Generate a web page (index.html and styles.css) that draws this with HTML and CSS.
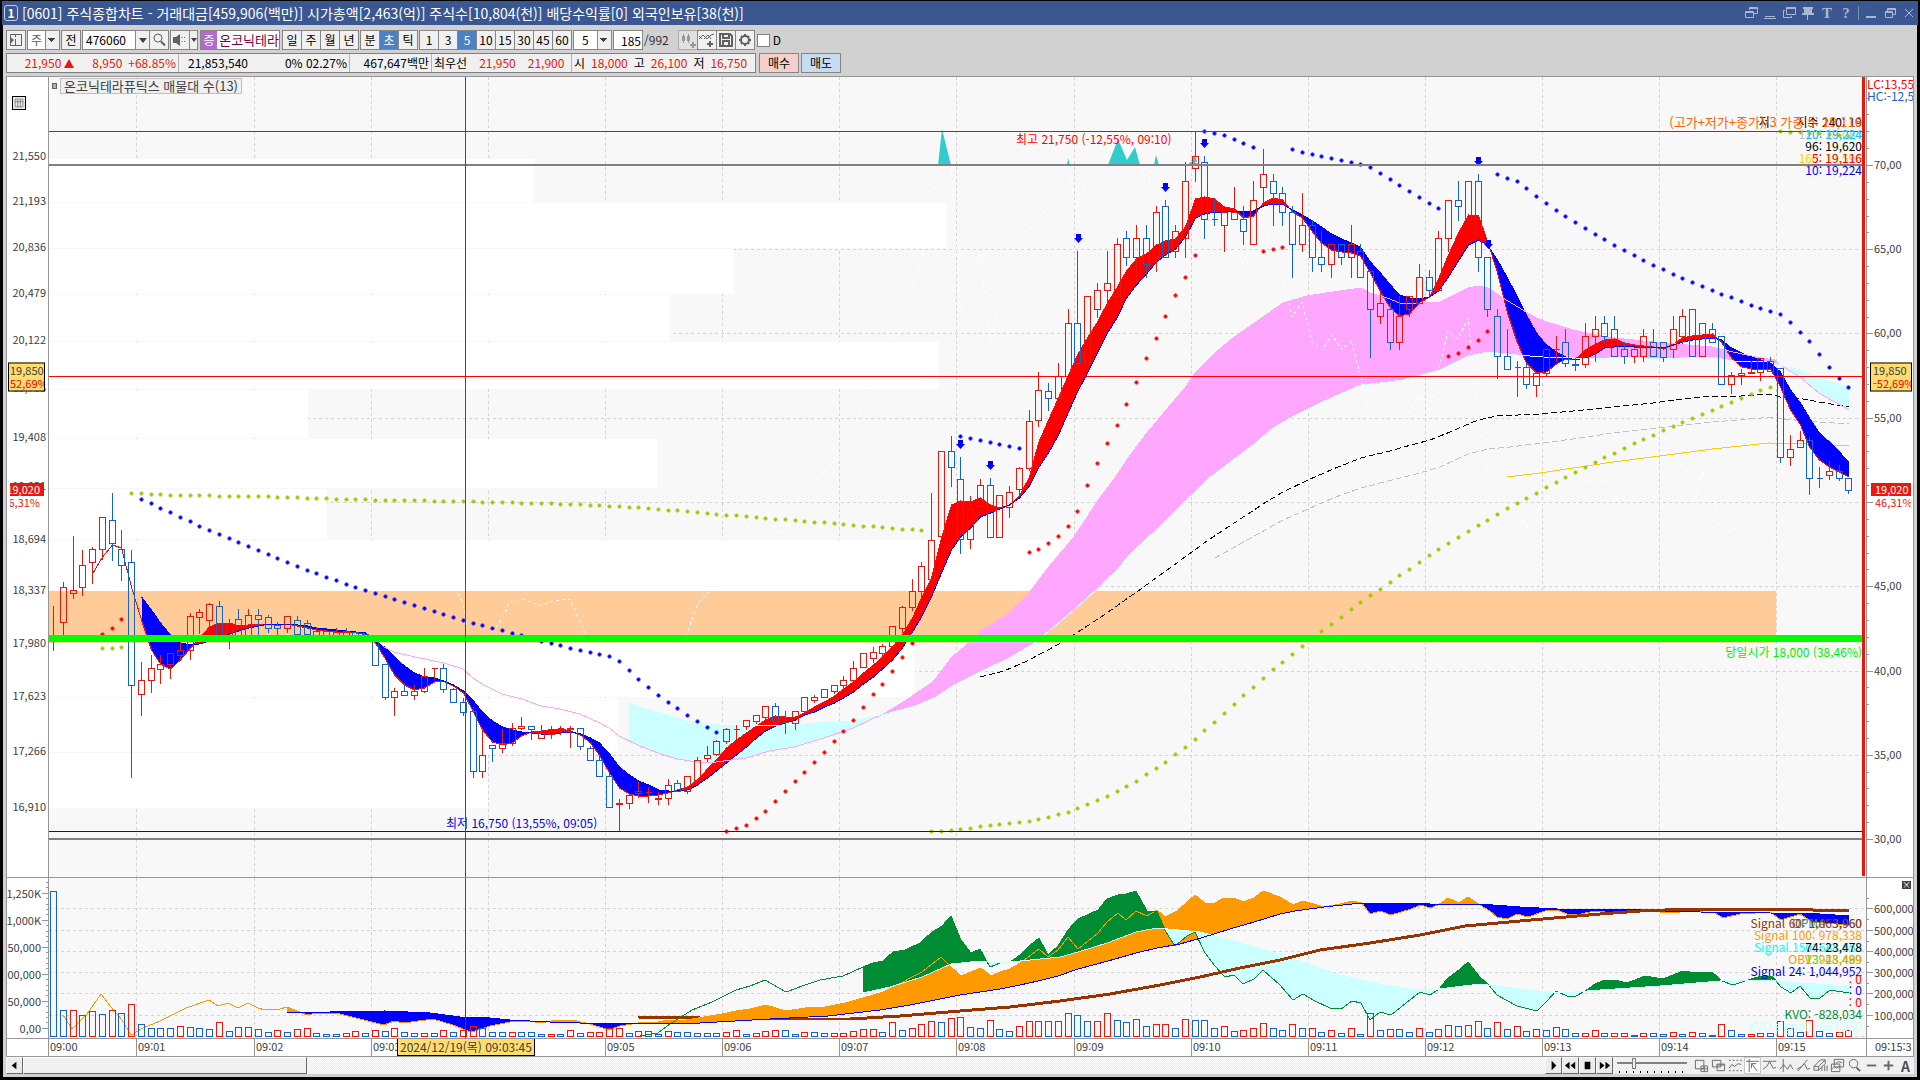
FILE: index.html
```html
<!DOCTYPE html>
<html lang="ko">
<head>
<meta charset="utf-8">
<title>[0601] 주식종합차트</title>
<link rel="stylesheet" href="styles.css">
</head>
<body>
<header class="titlebar">
  <span class="title-no">1</span>
  <h1 class="title-text">[0601] 주식종합차트 - 거래대금[459,906(백만)] 시가총액[2,463(억)] 주식수[10,804(천)] 배당수익률[0] 외국인보유[38(천)]</h1>
  <div class="window-tools">
    <button aria-label="링크"><svg viewBox="0 0 14 14"><path d="M5.500 4V1.500h8v6H10M1.500 5.500h8v6h-8zM1 6.500h8M5 2.500h8"/></svg></button>
    <button aria-label="접기"><svg viewBox="0 0 14 14"><path d="M1 12.500h12M2 10.500h10"/></svg></button>
    <button aria-label="복사"><svg viewBox="0 0 14 14"><path d="M4.500 1.500h9v7h-9zM4 2.500h9M3 4.500H1.500v7h8V10"/></svg></button>
    <button aria-label="고정"><svg viewBox="0 0 14 14"><path class="solid" d="M2 1h10v2h-1v4h2v2H1V7h2V3H2zM6 9h1v5H6z"/></svg></button>
    <button class="glyph">T</button>
    <button class="glyph">?</button>
    <span class="tool-sep"></span>
    <button aria-label="최소화"><svg viewBox="0 0 14 14"><path class="solid" d="M2 10h10v2H2z"/></svg></button>
    <button aria-label="이전 크기"><svg viewBox="0 0 14 14"><path d="M4.500 5V2.500h8v6H10M2.500 5.500h7v6h-7zM2 6.500h8M4.500 3.500h8"/></svg></button>
    <button aria-label="닫기"><svg viewBox="0 0 14 14"><path d="M3 3l8 8M11 3l-8 8"/></svg></button>
  </div>
</header>

<main class="workspace">
  <div class="toolbar">
    <button class="tb" aria-label="종목 목록"><svg viewBox="0 0 18 18"><path d="M3.500 3.500h11v11h-11z"/><path class="fill" d="M3 6l4 3-4 4z"/><path d="M8.500 3v3M8.500 8v6"/></svg></button>
    <select class="sel sel-kind" aria-label="종류"><option>주</option></select>
    <button class="tb">전</button>
    <div class="joined">
      <input class="code" type="text" value="476060" aria-label="종목코드">
      <button class="tb arrow" aria-label="최근 종목"></button>
      <button class="tb" aria-label="검색"><svg viewBox="0 0 18 18"><circle cx="8" cy="7" r="4"/><path class="thick" d="M11 10.500l4 4"/></svg></button>
    </div>
    <div class="joined">
      <button class="tb" aria-label="음성"><svg viewBox="0 0 18 18"><path class="fill" d="M2 6h3l4-3v12l-4-3H2z"/><path d="M11 6v1M11 10v1M13.500 6v1M13.500 10v1"/></svg></button>
      <button class="tb tiny arrow" aria-label="음성 설정"></button>
    </div>
    <div class="stock"><span class="stock-tag">증</span><span class="stock-name">온코닉테라</span></div>
    <div class="joined"><button class="tb">일</button><button class="tb">주</button><button class="tb">월</button><button class="tb">년</button></div>
    <div class="joined"><button class="tb">분</button><button class="tb on">초</button><button class="tb">틱</button></div>
    <div class="joined"><button class="tb">1</button><button class="tb">3</button><button class="tb on">5</button><button class="tb">10</button><button class="tb">15</button><button class="tb">30</button><button class="tb">45</button><button class="tb">60</button></div>
    <select class="sel sel-step" aria-label="주기"><option>5</option></select>
    <label class="count"><input type="text" value="185" aria-label="표시 개수">/992</label>
    <div class="joined tools">
      <button class="tb faint" aria-label="봉 추가"><svg viewBox="0 0 18 18"><path class="fill" d="M3 5h3v5H3zM8 5h3v5H8z"/><path d="M4.500 3v9M9.500 3v9"/><path class="thick" d="M11 14h6M14 11v6"/></svg></button>
      <button class="tb" aria-label="지표 추가"><svg viewBox="0 0 18 18"><path d="M1 8l4-4 4 4 4-4 3-1M1 5l3 3M6 8l4-4 3 4"/><path class="thick" d="M9 13h6M12 10v6"/></svg></button>
      <button class="tb" aria-label="저장"><svg viewBox="0 0 18 18"><path class="thick" d="M3 3h10l2 2v10H3zM6 3v4h6V3M6 15v-5h6v5"/></svg></button>
      <button class="tb" aria-label="설정"><svg viewBox="0 0 18 18"><circle class="thick" cx="9" cy="9" r="4"/><path class="thick" d="M9 3v2M9 13v2M3 9h2M13 9h2M5 5l1 1M12 12l1 1M13 5l-1 1M6 12l-1 1"/></svg></button>
    </div>
    <label class="check"><input type="checkbox">D</label>
  </div>

  <div class="quote">
    <div class="quote-box">
      <span class="cell c1 red"><b>21,950<i class="up"></i></b><b>8,950</b><b>+68.85%</b></span>
      <span class="cell c2"><b>21,853,540</b><b>0% 02.27%</b></span>
      <span class="cell c3">467,647백만</span>
      <span class="cell c4"><b>최우선</b><b class="red">21,950</b><b class="red">21,900</b></span>
      <span class="cell c5"><b>시</b><b class="red">18,000</b><b>고</b><b class="red">26,100</b><b>저</b><b class="red">16,750</b></span>
    </div>
    <button class="deal buy">매수</button>
    <button class="deal sell">매도</button>
  </div>

  <section class="chart" aria-label="온코닉테라퓨틱스 차트">
    <div class="axis axis-left" id="price-axis"><button class="grid-btn" aria-label="표"><svg viewBox="0 0 14 14"><path d="M2.500 2.500h9v9h-9zM2 5.500h10M5.500 3v9M8.500 3v9"/></svg></button></div>
    <div class="plot" id="price-plot">
      <svg id="price-svg" viewBox="49 77 1817 800" preserveAspectRatio="none" role="img" aria-label="가격"></svg>
      <div class="legend"><i></i><span>온코닉테라퓨틱스 매물대 수(13)</span></div>
    </div>
    <div class="axis axis-right" id="percent-axis"></div>

    <div class="axis axis-left lower" id="volume-axis"></div>
    <div class="plot lower" id="volume-plot">
      <svg id="volume-svg" viewBox="49 878 1817 160" preserveAspectRatio="none" role="img" aria-label="거래량"></svg>
    </div>
    <div class="axis axis-right lower" id="osc-axis"><button class="close-pane" aria-label="닫기">×</button></div>

    <div class="axis-left time"></div>
    <div class="plot time" id="time-axis"></div>
    <div class="axis-right time last-time">09:15:3</div>
  </section>

  <footer class="scroller">
    <button class="sb" aria-label="왼쪽"><svg viewBox="0 0 16 16"><path class="black" d="M10 4v8L5 8z"/></svg></button>
    <div class="track"><div class="thumb"></div></div>
    <button class="sb" aria-label="재생"><svg viewBox="0 0 16 16"><path class="black" d="M6 3v10l5-5z"/></svg></button>
    <button class="sb" aria-label="뒤로"><svg viewBox="0 0 16 16"><path class="black" d="M7 4v8L2 8zM13 4v8L8 8z"/></svg></button>
    <button class="sb" aria-label="정지"><svg viewBox="0 0 16 16"><path class="black" d="M5 4h6v8H5z"/></svg></button>
    <button class="sb" aria-label="앞으로"><svg viewBox="0 0 16 16"><path class="black" d="M3 4v8l5-4zM9 4v8l5-4z"/></svg></button>
    <input class="speed" type="range" min="0" max="9" value="2" aria-label="속도">
    <div class="draw-tools">
      <button aria-label="화면 추가"><svg viewBox="0 0 16 16"><path d="M1.500 2.500h9v9h-9zM7.500 8.500h7v6h-7zM11 9v5M8 11.500h6"/></svg></button>
      <button aria-label="화면 겹침"><svg viewBox="0 0 16 16"><path d="M1.500 2.500h9v7h-9zM6.500 6.500h8v7h-8zM6 7.500h8"/></svg></button>
      <button aria-label="구간"><svg viewBox="0 0 16 16"><path d="M1 2.500h2M5 2.500h2M9 2.500h2M13 2.500h2M1 13.500h2M5 13.500h2M9 13.500h2M13 13.500h2M1 11l3-4 3 2 4-3 3 1"/></svg></button>
      <button class="pressed" aria-label="십자선"><svg viewBox="0 0 16 16"><path d="M1 3.500h14M4.500 1v14M7 6l6 8M7 6v5M7 6h5"/></svg></button>
      <button aria-label="수평선"><svg viewBox="0 0 16 16"><path d="M1 3.500h14M1 12l4-3 3-5 4 7 3-1"/></svg></button>
      <button aria-label="수직선"><svg viewBox="0 0 16 16"><path d="M4.500 1v14M1 12l4-5 4 5 3-5 3 5"/></svg></button>
      <button aria-label="추세선"><svg viewBox="0 0 16 16"><path d="M2 14L12 2M1 12l5-3 3-3 3 6 3-1"/></svg></button>
      <button aria-label="전체 지우기"><svg viewBox="0 0 16 16"><path d="M1 9l7-7h5L6 9zM1 9v4h5V9M6 13l7-7V2M9.500 9v5M12.500 8v6M15 8v6"/></svg></button>
      <button aria-label="지표 겹치기"><svg viewBox="0 0 16 16"><path d="M4.500 1.500h10v8h-10zM1.500 6.500h9v8h-9zM2 12l3-3 2 2 3-2M6 6l3-2 4 1"/></svg></button>
      <button aria-label="돋보기"><svg viewBox="0 0 16 16"><circle cx="7" cy="6" r="4.500"/><path class="thick" d="M10 10l4 4"/></svg></button>
      <button aria-label="축소"><svg viewBox="0 0 16 16"><path class="thick" d="M3 8h10"/></svg></button>
      <button aria-label="확대"><svg viewBox="0 0 16 16"><path class="thick" d="M3 8h10M8 3v10"/></svg></button>
      <button class="letter">A</button>
    </div>
  </footer>
</main>
<script src="chart.js"></script>
</body>
</html>
```
FILE: styles.css
```css
* { box-sizing: border-box; }

html, body { height: 100%; }

body {
  margin: 0;
  padding: 1px 2px 3px;
  display: flex;
  flex-direction: column;
  min-height: 720px;
  background: #000;
  color: #000;
  font-family: "Noto Sans CJK KR", sans-serif;
  font-size: 12px;
  line-height: 14px;
}

button, input, select { font: inherit; color: inherit; margin: 0; padding: 0; border-radius: 0; }
button { display: flex; align-items: center; justify-content: center; }
b, i { font-weight: normal; font-style: normal; }
svg { display: block; fill: none; stroke: #808080; }
.red { color: #e8180c; }

/* title bar */
.titlebar {
  flex: none;
  display: flex;
  align-items: center;
  height: 24px;
  padding: 0 2px;
  background: #3a5791;
  color: #fff;
}
.title-no {
  width: 14px;
  height: 16px;
  border: 1px solid #c6d0e6;
  border-radius: 3px;
  text-align: center;
  font-weight: bold;
}
.title-text { flex: 1; margin: 0 0 0 4px; font-size: 14px; font-weight: normal; white-space: nowrap; }
.window-tools { display: flex; align-items: center; gap: 5px; }
.window-tools button { width: 14px; height: 16px; border: 0; background: none; color: #aab8d6; }
.window-tools svg { width: 14px; height: 14px; stroke: #aab8d6; }
.window-tools .solid { fill: #aab8d6; stroke: none; }
.window-tools .glyph { font: bold 15px/16px "Liberation Serif", serif; }
.tool-sep { width: 1px; height: 14px; background: #7e8fb5; }

/* workspace */
.workspace {
  flex: 1;
  min-height: 0;
  display: flex;
  flex-direction: column;
  margin: 0 1px;
  padding: 5px 3px 3px;
  background: #d1d1d1;
}

.toolbar { flex: none; display: flex; align-items: center; height: 20px; gap: 1px; white-space: nowrap; }
.joined { display: flex; height: 20px; }
.joined > * + * { margin-left: -1px; }
.tb { width: 20px; height: 20px; border: 1px solid #868686; background: #f0f0f0; }
.tb.on { background: #4b82c6; color: #fff; }
.tb.faint { opacity: 0.5; }
.tb svg { width: 18px; height: 18px; stroke: #606060; }
.tb .fill { fill: #606060; stroke: none; }
.tb .thick { stroke-width: 2; }
.tb.arrow { width: 15px; }
.tb.tiny.arrow { width: 9px; }
.tb.arrow::before { content: ""; border: 4px solid transparent; border-top: 5px solid #404040; border-bottom: 0; }
.tb.tiny.arrow::before { border-width: 4px 3px 0; }

.sel {
  appearance: none;
  height: 20px;
  border: 1px solid #868686;
  background:
    linear-gradient(to bottom right, #404040 50%, transparent 50%) right 3px center / 4px 4px no-repeat,
    linear-gradient(to bottom left, #404040 50%, transparent 50%) right 7px center / 4px 4px no-repeat,
    linear-gradient(#868686, #868686) right 13px top / 1px 20px no-repeat,
    linear-gradient(#f0f0f0, #f0f0f0) right / 13px 20px no-repeat,
    #fff;
}
.sel-kind { width: 33px; padding-left: 3px; color: #606060; }
.sel-step { width: 39px; padding-left: 8px; }
.code { width: 54px; padding-left: 3px; border: 1px solid #868686; background: #fff; }
.stock { display: flex; width: 80px; height: 20px; margin: 0 1px; border: 1px solid #868686; background: #fff; overflow: hidden; }
.stock-tag { width: 17px; background: #b26ad0; color: #fff; text-align: center; line-height: 18px; }
.stock-name { padding-left: 2px; color: #7a0040; font-size: 13px; line-height: 18px; }
.count { display: flex; align-items: center; gap: 1px; color: #303030; }
.count input { width: 30px; height: 20px; padding-right: 1px; border: 1px solid #868686; background: #fff; color: #000; text-align: right; }
.tools { margin-left: 8px; }
.check { display: flex; align-items: center; gap: 3px; }
.check input { appearance: none; width: 13px; height: 13px; margin-left: 1px; border: 1px solid #808080; background: #fff; }

/* quote row */
.quote { flex: none; display: flex; gap: 2px; height: 20px; margin: 3px 0; white-space: nowrap; }
.quote-box { display: flex; width: 750px; border: 1px solid #808080; background: #f0f0f0; }
.cell { display: flex; align-items: center; padding: 0 2px; border-left: 1px solid #b4b4b4; }
.cell:first-child { border-left: 0; }
.c1 { width: 171px; justify-content: flex-end; gap: 0 6px; }
.c1 b:first-child { display: flex; align-items: center; gap: 3px; margin-right: 12px; }
.c2 { width: 171px; justify-content: space-between; padding-left: 9px; }
.c3 { width: 82px; justify-content: flex-end; }
.c4 { width: 140px; gap: 12px; }
.c5 { flex: 1; gap: 6px; }
.up { border: 5px solid transparent; border-bottom: 9px solid #e8180c; border-top: 0; }
.deal { width: 40px; border: 1px solid #868686; }
.buy { margin-left: 1px; background: #f5d0ca; }
.sell { background: #c5dcf2; }

/* chart frame */
.chart {
  flex: 1;
  min-height: 0;
  display: grid;
  grid-template-columns: 42px minmax(0, 1fr) 47px;
  grid-template-rows: minmax(0, 801fr) minmax(0, 160fr) 18px;
  border: 1px solid #969696;
  background: #fff;
  color: #404040;
}
.plot { position: relative; background: #f8f8f8; border-bottom: 1px solid #969696; overflow: hidden; }
.lower.plot, .lower.axis { border-bottom: 0; }
.plot svg { width: 100%; height: 100%; }
.plot path, .plot line, .plot rect { vector-effect: non-scaling-stroke; }
.axis { position: relative; border-bottom: 1px solid #969696; overflow: hidden; font-size: 11px; }
.axis-left { border-right: 1px solid #969696; }
.axis-right { border-left: 1px solid #969696; }
.time { position: relative; border-top: 1px solid #969696; border-bottom: 0; background: #fff; font-size: 11px; }
.last-time { padding: 0 0 0 8px; overflow: hidden; }

.label { position: absolute; transform: translateY(-50%); white-space: nowrap; }
.axis-left .label { right: 2px; }
.axis-left.lower .label { right: 7px; }
.axis-right .label { left: 7px; }
.axis-right .label.extreme { left: 0; font-size: 12px; }
.plot .label.end { right: 4px; }
.label.large { font-size: 13px; }
.tick { position: absolute; width: 2px; height: 1px; background: #969696; }
.tick.major { width: 6px; }
.axis-left .tick { right: 0; }
.axis-right .tick { left: 0; }

.price-tag {
  position: absolute;
  left: 3px;
  width: 42px;
  height: 29px;
  padding-left: 2px;
  border: 1px solid #000;
  background: #ffdc6e;
  line-height: 13px;
  overflow: hidden;
  white-space: nowrap;
  transform: translateY(-50%);
}
.axis-left .price-tag { left: 1px; width: 37px; padding-left: 1px; }
.price-tag span { display: block; color: #f00000; }
.last-tag { position: absolute; left: 4px; right: 2px; overflow: hidden; line-height: 13px; white-space: nowrap; }
.last-tag b, .last-tag span { display: block; padding-left: 4px; color: #e8180c; }
.last-tag b { background: #e8180c; color: #fff; }
.axis-left .last-tag { left: 3px; right: 4px; direction: rtl; }
.axis-left .last-tag b, .axis-left .last-tag span { padding: 0 4px 0 0; }

.grid-btn { position: absolute; left: 5px; top: 19px; width: 14px; height: 14px; border: 1px solid #000; background: #e8e8e8; }
.grid-btn svg { width: 12px; height: 12px; }
.close-pane { position: absolute; right: 2px; top: 3px; width: 9px; height: 8px; border: 0; background: #404040; color: #fff; font-size: 9px; line-height: 8px; }

.legend { position: absolute; left: 3px; top: 1px; display: flex; align-items: center; gap: 3px; font-size: 13px; }
.legend i { width: 5px; height: 6px; border: 1px solid #606060; background: #b0b0b0; }
.legend span { padding: 0 3px; border: 1px solid #c0c0c0; background: #f0f0f0; line-height: 14px; white-space: nowrap; }

.time-label { position: absolute; top: 0; height: 17px; padding: 0 0 0 1px; border-left: 1px solid #969696; }
.time-label:first-child { border-left: 0; }
.time-now { position: absolute; top: -1px; height: 18px; padding: 0 2px; border: 1px solid #000; background: #ffdc6e; font-size: 12px; line-height: 15px; white-space: nowrap; }

.orange { color: #ff6600; }
.amber { color: #ff9900; }
.cyan { color: #00ccff; }
.aqua { color: #00ffff; }
.ice { color: #ccffff; }
.blue { color: #0000e6; }
.steel { color: #1464c8; }
.scarlet { color: #ff0000; }
.brown { color: #993300; }
.forest { color: #008c32; }
.lime { color: #00f000; }
.black { color: #000; }
.silver { color: #c0c0c0; }
.gold { color: #ffcc00; }
.teal { color: #339999; }

/* bottom strip */
.scroller { flex: none; display: flex; align-items: center; height: 17px; background: #f0f0f0; }
.sb { flex: none; width: 17px; height: 17px; border: 1px solid; border-color: #f8f8f8 #686868 #686868 #f8f8f8; background: #ececec; }
.sb svg { width: 15px; height: 15px; stroke: none; }
.sb .black { fill: #000; }
.track { flex: 1; height: 17px; background: repeating-conic-gradient(#ececec 0 25%, #fdfdfd 0 50%) 0 0 / 2px 2px; }
.thumb { width: 19%; max-width: 284px; height: 17px; border: 1px solid; border-color: #fff #686868 #686868 #fff; background: #f0f0f0; }
.speed {
  appearance: none;
  width: 70px;
  height: 17px;
  margin: 0 6px 0 4px;
  background:
    linear-gradient(#808080, #808080) 0 5px / 100% 2px no-repeat,
    repeating-linear-gradient(to right, #000 0 1px, transparent 1px 7px) 2px 14px / 68px 2px no-repeat;
}
.speed::-webkit-slider-thumb { appearance: none; width: 4px; height: 11px; margin-top: -4px; border: 1px solid #808080; background: #f0f0f0; }
.draw-tools { display: flex; }
.draw-tools button { width: 17px; height: 17px; border: 0; background: none; }
.draw-tools .pressed { border: 1px solid #c8c8c8; background: #fff; }
.draw-tools svg { width: 15px; height: 15px; stroke: #686868; }
.draw-tools .thick { stroke-width: 2; }
.draw-tools .letter { font-weight: bold; font-size: 14px; color: #505050; }
```
FILE: chart.js
```js
const NS = 'http://www.w3.org/2000/svg';
const PLOT = { x: 49, w: 1817 };
const STEP = 9.757;
const cx = i => Math.floor(53.5 + STEP * i) + 0.5;

// direction, high, body top, body bottom, low
const CANDLES = `r606,635,640,650 r582,587,622,635 r536,590,593,598 r550,565,587,595 r547,549,562,583 r517,517,549,559 b493,520,543,560 b530,549,565,580 b550,562,685,777 r662,680,694,715
r655,668,680,692 r655,664,669,683 r653,653,664,678 r642,650,655,660 r613,616,650,659 r609,612,617,633 r603,604,620,635 b601,606,635,635 r619,625,640,648 b609,619,635,635
r609,615,635,635 b609,615,619,635 b615,617,628,632 b622,625,628,635 r616,616,628,632 b616,620,634,634 b620,623,634,634 r627,631,635,635 b631,631,635,635 r628,632,635,635
b628,631,635,635 b632,632,636,636 b634,634,638,638 b636,636,665,665 b664,664,697,699 r688,691,697,715 b683,691,695,695 r685,691,695,699 r668,676,691,692 r668,668,668,678
b664,668,689,692 b688,689,702,702 b698,702,712,715 b707,711,771,777 r728,755,771,777 b745,745,748,761 r729,743,748,752 r723,728,743,745 r717,726,728,729 b726,726,729,739
r725,733,738,738 r726,729,734,738 r726,728,728,734 r726,728,729,747 b728,728,746,749 b746,748,760,760 b755,760,776,776 b773,776,807,807 r799,803,804,831 r795,795,803,808
r782,791,793,797 r787,792,792,802 r792,798,799,804 r779,785,798,804 b780,783,791,791 r776,776,791,793 r757,760,780,780 r746,755,758,761 r740,741,754,755 r728,729,741,743
r725,729,729,738 r720,720,726,729 r715,715,721,723 r706,706,717,719 b703,706,721,721 b711,722,722,733 r711,711,723,729 r697,697,711,711 r695,697,700,702 r689,689,697,697
r685,685,691,693 r676,680,685,687 r661,668,680,682 r653,653,667,667 r647,652,658,662 r644,646,653,656 r626,626,646,646 r606,607,628,632 r579,591,607,610 r562,566,591,597
r493,540,579,581 r451,451,536,536 b436,451,467,486 b457,479,539,553 r496,509,539,548 r479,485,506,506 b478,485,537,537 r495,495,537,537 r486,492,507,517 r467,468,489,494
r410,421,468,470 r372,390,420,426 b383,391,398,410 r363,376,398,398 r309,323,376,376 b251,323,363,369 r296,296,363,363 r283,290,309,317 r251,283,290,309 r238,244,296,303
b231,238,257,265 r225,238,257,283 b225,238,264,277 r206,212,257,271 b200,206,257,257 r225,231,251,257 r162,181,238,257 r132,156,168,181 b156,162,219,238 b200,219,219,225
r212,212,225,251 r187,212,219,219 b206,219,231,244 r181,200,244,244 r149,174,187,203 b174,181,193,225 b187,193,212,225 b206,212,244,277 r193,225,244,251 b220,225,257,271
b231,257,264,271 r244,244,264,277 b244,244,257,264 r225,244,257,277 b244,251,277,277 b271,271,309,357 r290,303,316,323 b303,309,342,349 r296,316,342,349 r296,296,309,316
r264,277,303,303 b270,277,290,297 r231,238,290,290 r200,200,238,251 b181,200,206,220 r181,181,219,226 b174,181,257,271 b257,257,309,316 b309,316,356,378 b329,356,369,369
r361,367,367,396 b364,367,384,388 r372,373,385,396 r349,349,373,375 r336,349,349,361 b329,342,363,366 b358,364,365,370 r323,336,364,367 r316,329,336,361 b316,323,336,343
b316,329,356,356 b342,349,356,363 r349,349,356,362 r329,336,356,361 b329,342,356,356 b342,342,357,361 r316,329,349,357 r309,316,336,343 b309,309,356,356 r323,323,356,356
b323,329,342,342 b336,336,384,384 r372,375,384,393 r369,373,375,384 r361,372,373,373 r358,358,372,380 b357,361,371,371 b368,368,457,462 r435,449,457,465 r431,440,447,447
b437,440,478,494 b467,478,478,487 r461,471,475,479 b465,471,478,480 b478,478,490,493`
  .split(/\s+/).map(s => [s[0], ...s.slice(1).split(',').map(Number)]);

// fast and slow averages, one value per bar
const FAST_START = 4, SLOW_START = 9;
const FAST = [574,557,545,548,587,620,650,664,669,660,648,638,627,623,623,626,625,624,624,624,624,626,628,630,631,632,632,633,634,643,659,675,685,690,688,682,681,686,693,712,730,742,745,743,736,732,731,730,729,731,735,743,755,773,788,794,796,796,795,793,790,787,780,769,760,748,740,733,726,720,716,717,717,713,707,702,696,689,682,673,665,657,647,635,618,598,578,538,505,501,502,498,505,508,505,496,477,443,420,398,375,355,338,322,303,287,271,259,254,245,241,239,227,199,197,199,207,209,218,216,203,198,200,212,218,232,243,250,252,253,256,273,292,308,316,314,303,297,279,255,233,215,216,241,273,313,343,363,373,372,364,359,359,350,344,340,339,343,345,346,347,349,344,338,336,335,334,342,358,367,369,370,369,387,410,425,447,460,467,472,477];
const SLOW = [597,610,623,635,643,645,644,641,637,634,631,628,626,624,624,624,625,626,628,629,630,631,632,633,639,648,657,666,673,677,678,681,685,691,701,712,721,727,730,732,733,734,734,733,732,734,738,743,754,767,775,781,785,790,791,791,790,785,778,771,763,755,747,738,731,726,723,720,715,712,707,703,698,692,684,677,669,660,648,632,617,597,573,550,537,528,517,513,509,505,498,486,468,453,435,412,392,373,353,333,317,298,285,274,262,255,249,237,218,214,212,212,211,212,211,206,204,204,210,215,221,227,234,239,243,247,262,273,285,295,298,299,297,291,277,261,245,240,245,260,278,297,315,333,345,352,357,360,358,354,348,347,346,347,347,347,348,345,342,340,339,338,340,348,353,357,360,363,372,390,403,418,433,442,452,462];

const pts = s => s.trim().split(/\s+/).map(p => p.split(',').map(Number));
const at = (line, x) => {
  for (let k = 1; k < line.length; k++) {
    const [x0, y0] = line[k - 1], [x1, y1] = line[k];
    if (x <= x1) return y0 + (y1 - y0) * Math.max(0, (x - x0) / (x1 - x0));
  }
  return line[line.length - 1][1];
};

function pen(svg) {
  const add = (name, attrs) => {
    const el = document.createElementNS(NS, name);
    for (const k in attrs) el.setAttribute(k, attrs[k]);
    svg.appendChild(el);
    return el;
  };
  return {
    path: (d, a) => add('path', { d, stroke: 'none', ...a }),
    line: (points, stroke, a) => add('path', { d: 'M' + points.map(p => p.join(' ')).join('L'), stroke, 'shape-rendering': 'crispEdges', ...a }),
    rect: (x, y, w, h, fill, a) => add('rect', { x, y, width: w, height: h, fill, stroke: 'none', 'shape-rendering': 'crispEdges', ...a }),
  };
}

// fill between two lines, one colour where a runs above b, the other where it runs below
function band(p, a, b, x0, x1, above, below) {
  let up = '', down = '';
  for (let x = x0; x < x1; x++) {
    const e = Math.min(x + 1, x1);
    const ya = at(a, x), yb = at(b, x), ya2 = at(a, e), yb2 = at(b, e);
    const d = `M${x} ${ya.toFixed(1)}L${e} ${ya2.toFixed(1)}V${yb2.toFixed(1)}L${x} ${yb.toFixed(1)}Z`;
    if (ya + ya2 <= yb + yb2) up += d; else down += d;
  }
  p.path(up, { fill: above, 'shape-rendering': 'crispEdges' });
  p.path(down, { fill: below, 'shape-rendering': 'crispEdges' });
}

const GRID_X = [136, 254, 371, 488, 605, 722, 839, 956, 1074, 1191, 1308, 1425, 1542, 1659, 1776];
const RED = '#e8180c', BLUE = '#1464c8';

/* price pane */
const P = pen(document.getElementById('price-svg'));
const dash = { 'stroke-dasharray': '3 3' };
GRID_X.forEach(x => P.line([[x + .5, 77], [x + .5, 877]], '#d3d3d3', dash));
[249, 333, 418, 502, 586, 671, 755].forEach(y => P.line([[49, y + .5], [1862, y + .5]], '#d3d3d3', dash));

// volume profile
[[159, 202, 534], [203, 248, 947], [249, 294, 734], [295, 341, 670], [342, 389, 939], [390, 438, 308], [439, 488, 657],
 [489, 539, 327], [540, 591, 1060], [643, 697, 915], [698, 752, 618], [753, 808, 488]]
  .forEach(([t, b, r]) => P.rect(49, t, r - 49, b - t, '#fff'));
P.rect(49, 591, 1727, 52, '#ffcc99');

P.path('M938 165L942 129L944 137L951 165ZM1067 165L1068 158L1070 165ZM1108 165L1118 139L1127 160L1135 147L1140 165ZM1154 165L1156 155L1159 165ZM1188 165L1195 155L1198 165Z', { fill: '#33cccc' });

const OVER = pts(`375,638 384,647 394,652 415,657 444,663 463,669 473,678 482,684 502,694 522,699 541,706 560,709 580,714 600,723 609,728 619,736 640,746 658,753 677,759 697,762 716,762 746,758 769,751 794,747 824,738 853,728 885,713 902,703 921,690 933,682 952,657 970,642 980,632 1009,613 1029,593 1048,568 1074,537 1097,502 1117,475 1129,457 1147,433 1167,409 1185,388 1195,373 1215,353 1233,338 1253,324 1273,310 1283,303 1307,296 1333,292 1361,288 1370,293 1387,298 1400,303 1420,303 1440,302 1448,298 1468,288 1478,286 1488,288 1503,298 1523,310 1536,318 1547,322 1573,330 1605,337 1643,341 1687,345 1712,347 1733,352 1761,358 1775,360 1780,365 1800,377 1819,393 1849,410`);
const UNDER = pts(`629,703 640,707 667,715 686,721 707,724 726,726 794,725 826,722 853,721 885,714 915,706 936,697 954,685 980,672 1009,658 1033,644 1054,627 1074,610 1097,589 1117,570 1131,553 1154,532 1179,507 1195,492 1208,479 1233,460 1253,445 1273,428 1292,417 1312,407 1333,397 1361,385 1380,383 1403,380 1417,376 1440,370 1468,356 1488,352 1517,355 1543,357 1573,358 1607,358 1630,357 1660,359 1700,357 1717,358 1733,361 1770,362 1780,365 1800,370 1819,378 1849,387`);
band(P, OVER, UNDER, 629, 1849, '#ffa6ff', '#ccffff');

P.line(pts(`458,594 463,603 468,633`), '#fff', dash);
P.line(pts(`492,632 502,619 510,602 522,599 531,602 541,606 550,602 560,600 570,599 578,617 585,633`), '#fff', dash);
P.line(pts(`684,642 693,617 698,603 709,592 741,537 765,503 776,531 786,533 804,484 815,484 826,469 844,452 854,428 863,403 900,330 923,252 934,200 938,165 951,165 956,237 960,313 980,253 991,347 999,301 1010,297 1018,280 1038,203 1048,217 1067,160 1078,223 1087,173 1108,165 1140,165 1147,188 1154,165 1165,213 1185,160 1198,163 1204,243 1233,237 1243,263 1263,223 1283,277 1292,317 1302,302 1312,342 1322,350 1332,335 1342,350 1351,340 1361,377 1370,417 1380,413 1391,457 1410,410 1420,395 1429,411 1448,331 1458,339 1468,318 1480,430 1490,485 1509,511 1518,512 1528,528 1547,495 1566,509 1575,509 1585,480 1605,480 1614,501 1644,483 1660,505 1683,460 1693,507 1702,470 1712,492 1722,535 1741,525 1751,525 1761,507 1771,520 1776,548`), '#fff', dash);

P.line(pts(`980,677 1004,671 1027,661 1061,643 1075,634 1104,615 1138,591 1163,573 1207,541 1263,504 1283,492 1308,480 1333,469 1361,458 1390,451 1400,448 1430,440 1450,432 1478,420 1497,416 1540,414 1573,411 1613,407 1653,403 1683,399 1712,396 1741,396 1772,394 1780,397 1803,399 1819,402 1849,407`), '#000', { 'stroke-dasharray': '6 3' });
P.line(pts(`1215,558 1240,544 1260,533 1283,520 1308,509 1333,498 1361,488 1400,478 1420,473 1440,467 1468,454 1488,449 1510,447 1543,443 1573,439 1613,433 1667,427 1712,422 1750,419 1772,417 1783,419 1819,422 1849,424`), '#c0c0c0', { 'stroke-dasharray': '6 3' });
P.line(pts(`1507,477 1540,473 1573,468 1613,462 1660,456 1712,449 1741,446 1768,443 1807,444 1849,446`), '#ffcc00');

const fast = FAST.map((y, k) => [cx(k + FAST_START), y]);
const slow = SLOW.map((y, k) => [cx(k + SLOW_START), y]);
band(P, fast, slow, cx(SLOW_START), cx(184), '#ff0000', '#0000ff');
P.line(fast, '#f01010');
P.line(slow, '#0000ff');
P.line(OVER, '#ffa6ff');
P.line(UNDER, '#ccffff');

// candles
for (const dir of 'rb') {
  let d = '';
  CANDLES.forEach(([c, hi, top, bot, lo], i) => {
    if (c !== dir) return;
    const x = cx(i), t = top + .5, b = bot + .5;
    d += `M${x} ${hi}V${t}M${x} ${b}V${lo + 1}M${x - 3} ${t}H${x + 3}V${b}H${x - 3}Z`;
  });
  P.path(d, { stroke: dir === 'r' ? RED : BLUE, 'shape-rendering': 'crispEdges' });
}

// trailing stops: a dot for every bar on the given line
function dots(i0, i1, line, fill) {
  const l = pts(line);
  let d = '';
  for (let i = i0; i <= i1; i++) {
    const x = cx(i), y = Math.round(at(l, x)) + .5;
    d += `M${x - 1} ${y - 2}h2v1h1v2h-1v1h-2v-1h-1v-2h1z`;
  }
  P.path(d, { fill });
}
const DB = '#0000ff', DG = '#99cc00', DR = '#ff0000';
dots(9, 68, '140,498 170,512 209,530 248,546 287,562 336,580 375,593 414,605 453,617 492,628 522,635 550,643 580,650 609,656 619,661 639,679 648,687 669,702 687,715 707,727 716,732', DB);
dots(93, 99, '960,436 1019,448', DB);
dots(118, 123, '1204,131 1224,135 1253,147', DB);
dots(127, 142, '1292,149 1312,154 1341,160 1361,164 1370,167 1380,173 1400,185 1419,197 1439,208', DB);
dots(148, 184, '1497,174 1517,181 1546,203 1575,222 1614,245 1644,260 1673,274 1712,290 1741,301 1771,311 1780,314 1790,321 1810,341 1829,366 1849,388', DB);
dots(5, 7, '101,648 111,648 121,647', DG);
dots(8, 89, '131,493 180,495 258,496 345,499 463,501 570,504 639,507 707,513 794,520 844,524 921,530', DG);
dots(90, 176, '931,831 941,831 960,829 999,824 1029,821 1048,817 1068,812 1087,804 1107,796 1136,781 1165,762 1185,747 1195,739 1263,678 1302,646 1322,631 1361,602 1400,575 1439,549 1468,531 1497,514 1527,498 1556,482 1595,462 1624,448 1653,435 1683,422 1712,410 1741,398 1761,390 1771,387', DG);
dots(177, 184, '1780,131 1800,132 1819,133 1839,135 1849,136', DG);
dots(5, 7, '101,635 111,629 121,619', DR);
dots(69, 88, '726,831 746,825 765,812 785,791 804,773 833,743 853,721 873,695 892,672 912,643', DR);
dots(100, 117, '1029,552 1038,549 1048,543 1058,536 1068,527 1078,510 1087,486 1097,464 1107,444 1117,426 1126,405 1136,383 1146,359 1156,339 1165,317 1175,296 1185,278 1195,255', DR);
dots(124, 126, '1263,251 1283,247', DR);
dots(143, 147, '1448,356 1458,353 1468,347 1478,340 1488,331', DR);

// sell arrows
P.path([[960, 444], [990, 465], [1078, 238], [1165, 187], [1204, 143], [1478, 161], [1488, 244]]
  .map(([x, y]) => `M${x - 2} ${y - 4}h5v4h2l-4.500 5l-4.500 -5h2z`).join(''), { fill: DB });

// reference levels
P.rect(49, 164, 1814, 2, '#808080');
P.rect(49, 838, 1814, 2, '#808080');
P.rect(49, 831, 1814, 1, '#0000ff');
P.rect(49, 635, 1814, 7, '#00ff00');
P.rect(49, 131, 1814, 1, '#ff0000');
P.rect(49, 376, 1814, 1, '#ff0000');
P.rect(465, 77, 1, 800, '#ff0000');
P.rect(1862, 77, 3, 799, RED);

/* volume pane */
const V = pen(document.getElementById('volume-svg'));
GRID_X.forEach(x => V.line([[x + .5, 878], [x + .5, 1038]], '#d3d3d3', dash));
[908, 930, 951, 972, 993, 1015, 1036].forEach(y => V.line([[49, y + .5], [1866, y + .5]], '#d3d3d3', dash));

const OBV = pts(`63,1015 72,1029 87,1014 101,994 111,1007 122,1020 131,1035 143,1028 160,1021 186,1008 209,1000 218,1006 228,1003 238,1008 248,1003 258,1008 265,1010 280,1009 287,1007 295,1010 307,1015 317,1013 336,1013 360,1019 384,1025 394,1021 404,1023 433,1019 453,1025 468,1031 472,1032 490,1026 510,1022 530,1021 541,1023 556,1020 572,1020 590,1024 609,1030 620,1026 638,1023 658,1022 669,1020 680,1021 698,1018 722,1014 736,1011 750,1009 766,1005 786,1011 805,1008 825,1007 845,1003 863,998 883,992 898,985 910,978 922,972 941,957 951,967 961,976 981,968 991,976 1000,972 1010,969 1020,963 1039,949 1048,957 1058,950 1068,937 1078,949 1098,933 1107,922 1118,913 1126,920 1136,911 1147,916 1157,910 1165,917 1177,911 1195,895 1205,903 1215,903 1224,898 1234,898 1243,902 1254,898 1263,891 1280,897 1293,905 1303,901 1324,907 1340,904 1352,901 1362,903 1370,914 1380,911 1391,915 1411,909 1421,905 1430,908 1438,905 1448,898 1459,903 1468,897 1480,905 1490,911 1497,917 1507,919 1517,914 1528,917 1545,911 1557,910 1567,914 1576,915 1595,911 1615,913 1650,911 1670,913 1690,911 1715,913 1723,918 1740,914 1770,912 1781,920 1800,914 1812,922 1825,923 1838,924 1849,926`);
const SIG24 = pts(`287,1012 330,1012 385,1011 430,1013 460,1017 490,1018 510,1020 550,1022 580,1023 640,1023 700,1023 770,1019 828,1016 880,1010 910,1005 960,995 1000,989 1020,985 1038,981 1058,976 1078,969 1108,961 1136,953 1157,948 1180,944 1201,938 1230,929 1254,922 1280,914 1295,911 1324,907 1362,903 1400,903 1430,904 1480,904 1520,907 1557,909 1640,910 1700,912 1770,913 1820,914 1849,916`);
const SIG60 = pts(`638,1017 700,1018 800,1019 850,1019 900,1016 960,1011 1010,1007 1060,1001 1110,994 1160,985 1200,977 1240,968 1280,960 1320,950 1370,943 1420,935 1465,926 1520,921 1600,914 1640,911 1690,909 1776,909 1849,911`);
const KVO = pts(`640,1036 658,1033 670,1024 692,1010 712,1002 736,990 750,986 765,980 786,992 805,985 820,980 843,976 863,967 873,963 883,961 893,952 905,950 920,943 932,932 942,926 951,916 961,940 971,953 980,949 990,967 1000,963 1010,962 1020,955 1028,947 1039,938 1048,955 1058,946 1068,930 1078,919 1098,910 1107,899 1118,895 1126,894 1136,891 1147,911 1157,911 1166,932 1175,946 1187,936 1195,932 1205,953 1215,966 1225,977 1234,975 1243,984 1254,979 1263,970 1280,985 1293,1000 1303,994 1315,1001 1330,1008 1341,1009 1352,1001 1361,1003 1370,1020 1380,1012 1391,1015 1401,1007 1420,992 1430,995 1439,989 1448,978 1459,970 1468,962 1480,977 1488,984 1497,995 1517,1006 1537,1011 1547,1001 1556,991 1567,996 1576,996 1585,991 1595,984 1605,980 1615,980 1627,983 1645,976 1663,979 1683,971 1697,973 1712,972 1722,981 1733,985 1745,981 1761,976 1772,976 1781,987 1791,993 1800,986 1810,998 1820,998 1830,990 1849,993`);
const KSIG = pts(`863,993 890,987 922,977 951,964 980,961 1000,963 1020,961 1060,957 1078,952 1107,943 1136,932 1157,928 1200,932 1230,940 1254,947 1280,954 1300,961 1340,975 1380,984 1411,989 1439,989 1480,984 1520,989 1560,993 1600,990 1660,986 1720,981 1772,980 1800,983 1849,986`);

V.line(SIG60, '#993300', { 'stroke-width': 3 });
band(V, OBV, SIG24, 287, 1849, '#ff9900', '#0000ff');
band(V, KVO, KSIG, 863, 1849, '#008c32', '#ccffff');
V.line(OBV, '#ff9900');
V.line(KVO, '#008c32');
V.line(KSIG, '#ccffff');
V.line(SIG24, '#0000ff');
V.line(SIG60.filter(p => p[0] >= 850), '#993300', { 'stroke-width': 3 });

// bar tops, one per candle
const VOLUME = `b891 b1010 r1010 b1015 r1011 b1014 r1010 b1013 r1004 b1024 b1028 b1028 b1028 r1026 b1027 b1028 b1029 r1022 b1031 r1027 r1027 b1029 b1032 r1030 b1032 r1029 r1028 b1033 b1034 b1034 r1033 r1031 b1033 r1030 b1031 r1028 b1032 b1033 r1033 b1033 r1030 b1032 r1030 r1026 b1028 b1032 b1032 r1032 b1032 b1032 b1034 r1034 b1034 r1030 b1033 r1032 r1032 r1028 r1028 b1033 r1031
b1031 b1034 r1031 b1032 b1032 b1033 b1033 b1033 r1032 r1030 b1034 r1033 r1031 r1030 b1030 b1034 r1032 b1032 b1033 r1033 r1033 r1031 r1029 r1029 b1032 r1022 b1030 r1028 r1024 r1021 b1022 r1018 r1017 b1027 b1028 r1020 b1029 b1031 r1026 r1021 r1021 b1021 r1021 r1013 b1015 b1021 r1021 r1013 b1020 b1022 r1019 b1026 r1024 r1024 b1028 r1019 b1020 b1020 b1028 r1026 b1031 r1030 r1028 r1023 b1028
b1030 r1024 b1028 r1028 b1032 r1030 b1033 r1028 b1034 r1013 b1030 r1029 b1029 b1032 r1028 b1032 r1029 r1025 b1026 r1025 r1021 b1028 r1022 b1029 r1026 b1031 r1029 b1030 r1027 b1029 b1033 r1033 r1030 b1033 r1033 r1033 b1035 r1033 b1033 b1034 r1032 b1034 r1032 b1033 b1035 r1024 b1030 b1034 r1034 r1033 b1033 r1021 b1028 b1032 r1020 b1031 b1033 r1032 r1030`
  .split(/\s+/).map(s => [s[0], +s.slice(1)]);
for (const dir of 'rb') {
  const d = VOLUME.map(([c, y], i) => c === dir ? `M${cx(i) - 3} ${y + .5}h6V1036.500h-6Z` : '').join('');
  V.path(d, { stroke: dir === 'r' ? RED : BLUE, 'shape-rendering': 'crispEdges' });
}
V.rect(465, 878, 1, 160, '#ff0000');

/* text over the panes and on the axes */
function put(id, cls, html, style) {
  const el = document.createElement('span');
  el.className = cls;
  el.innerHTML = html;
  Object.assign(el.style, style);
  document.getElementById(id).appendChild(el);
}
const pctX = x => ((x - PLOT.x) / PLOT.w * 100).toFixed(3) + '%';
const pctP = y => ((y - 77) / 800 * 100).toFixed(3) + '%';
const pctV = y => ((y - 878) / 160 * 100).toFixed(3) + '%';

[[155, '21,550'], [200, '21,193'], [246, '20,836'], [292, '20,479'], [339, '20,122'], [387, '19,765'], [436, '19,408'], [485, '19,051'],
 [538, '18,694'], [589, '18,337'], [642, '17,980'], [695, '17,623'], [750, '17,266'], [806, '16,910']]
  .forEach(([y, t]) => put('price-axis', 'label', t, { top: pctP(y) }));
put('price-axis', 'price-tag', '19,850<span>52,69%</span>', { top: pctP(376.5) });
put('price-axis', 'last-tag', '<b>19,020</b><span>46,31%</span>', { top: pctP(483) });

[[165, '70,00'], [249, '65,00'], [333, '60,00'], [418, '55,00'], [502, ''], [586, '45,00'], [671, '40,00'], [755, '35,00'], [839, '30,00']]
  .forEach(([y, t]) => {
    put('percent-axis', 'tick major', '', { top: pctP(y) });
    if (t) put('percent-axis', 'label', t, { top: pctP(y - 1) });
  });
for (let v = 74; v > 30; v--) if (v % 5) put('percent-axis', 'tick', '', { top: pctP(165 + (70 - v) * 16.85) });
put('percent-axis', 'label extreme scarlet', 'LC:13,55', { top: pctP(84) });
put('percent-axis', 'label extreme steel', 'HC:-12,55', { top: pctP(96) });
put('percent-axis', 'price-tag', '19,850<span>-52,69%</span>', { top: pctP(376.5) });
put('percent-axis', 'last-tag', '<b>19,020</b><span>46,31%</span>', { top: pctP(483) });

[[122, 'black', '저&nbsp; &nbsp; &nbsp; &nbsp; 지수 240: 19'], [122, 'orange large', '(고가+저가+종가)/3 가중 5: 19,116'], [134, 'silver', '120: 28,084'], [134, 'cyan', '10: 19,224'],
 [146, 'black', '96: 19,620'], [158, 'gold', '160: 19,596'], [158, 'scarlet', '5: 19,116'], [170, 'blue', '10: 19,224'], [652, 'lime', '당일시가 18,000 (38,46%)']]
  .forEach(([y, c, t]) => put('price-plot', 'label end ' + c, t, { top: pctP(y) }));
put('price-plot', 'label scarlet', '최고 21,750 (-12,55%, 09:10)', { top: pctP(139), left: pctX(1016) });
put('price-plot', 'label blue', '최저 16,750 (13,55%, 09:05)', { top: pctP(823), left: pctX(446) });

[[893, '1,250K'], [920, '1,000K'], [947, '750,000'], [974, '500,000'], [1001, '250,000'], [1028, '0,00']]
  .forEach(([y, t]) => {
    put('volume-axis', 'tick major', '', { top: pctV(y) });
    put('volume-axis', 'label', t, { top: pctV(y) });
  });
for (let y = 882; y < 1030; y += 5.4) put('volume-axis', 'tick', '', { top: pctV(y) });
[[908, '600,000'], [930, '500,000'], [951, '400,000'], [972, '300,000'], [993, '200,000'], [1015, '100,000']]
  .forEach(([y, t]) => {
    put('osc-axis', 'tick major', '', { top: pctV(y) });
    put('osc-axis', 'label', t, { top: pctV(y) });
  });
for (let y = 898; y < 1038; y += 21.3) put('osc-axis', 'tick', '', { top: pctV(y) });

[[923, 'teal', 'OPMA: 3,960'], [923, 'brown', 'Signal 60: 1,063,960'], [935, 'amber', 'Signal 100: 978,338'], [947, 'aqua', 'Signal 150: 688,658'], [947, 'black', '74: 23,478'],
 [959, 'lime', '13: 23,489'], [959, 'amber', 'OBV: 948,499'], [971, 'blue', 'Signal 24: 1,044,952'], [979, 'scarlet', ': 0'], [990, 'blue', ': 0'],
 [1002, 'scarlet', ': 0'], [1014, 'forest', 'KVO: -828,034'], [1026, 'ice', 'KVO signal: -663,350']]
  .forEach(([y, c, t]) => put('volume-plot', 'label end ' + c, t, { top: pctV(y) }));

put('time-axis', 'time-label', '09:00', { left: '0' });
GRID_X.forEach((x, k) => put('time-axis', 'time-label', '09:' + String(k + 1).padStart(2, '0'), { left: pctX(x) }));
put('time-axis', 'time-now', '2024/12/19(목) 09:03:45', { left: pctX(397) });
```
